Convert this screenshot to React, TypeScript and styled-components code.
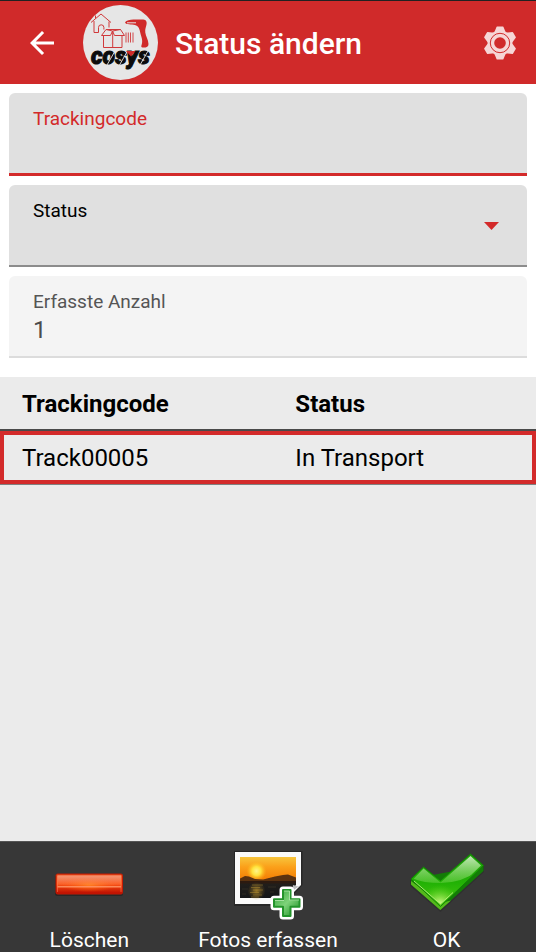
import React, { useState } from "react";
import styled, { createGlobalStyle } from "styled-components";

const GlobalStyle = createGlobalStyle`
  *, *::before, *::after { box-sizing: border-box; }
  body {
    margin: 0;
    background: #ebebeb;
    font-family: Roboto, "Liberation Sans", sans-serif;
    color: #000;
  }
  button, input, select { font: inherit; color: inherit; }
`;

const Screen = styled.div`
  display: flex;
  flex-direction: column;
  min-height: 100vh;
`;

const AppBar = styled.header`
  display: flex;
  align-items: center;
  min-height: 84px;
  padding: 0 19px 0 24px;
  border-top: 1px solid #212121;
  background: #d02a2a;
  color: #fff;
`;

const IconButton = styled.button`
  display: flex;
  padding: 0;
  border: 0;
  background: none;
  cursor: pointer;
`;

const LogoIcon = styled.svg`
  flex: none;
  margin-left: 23px;
`;

const LogoText = styled.text`
  font: italic 900 23px Roboto, "Liberation Sans", sans-serif;
`;

const Title = styled.h1`
  flex: 1;
  margin: 0 0 0 17px;
  padding-top: 3px;
  font-size: 30px;
  line-height: 36px;
  font-weight: 500;
`;

const Form = styled.form`
  display: flex;
  flex-direction: column;
  gap: 9px;
  padding: 9px 9px 19px;
  background: #fff;
`;

type Tone = "active" | "normal" | "readonly";

const tones = {
  active: { back: "#e0e0e0", line: "3px solid #d32a2a", label: "#d32a2a", value: "#000" },
  normal: { back: "#e0e0e0", line: "2px solid #8c8c8c", label: "#000", value: "#000" },
  readonly: { back: "#f4f4f4", line: "2px solid #dcdcdc", label: "#555", value: "#4c4c4c" },
};

const Field = styled.div<{ $tone: Tone }>`
  display: grid;
  grid-template-columns: 1fr auto;
  align-items: center;
  padding: 15px 24px 9px;
  border-bottom: ${(p) => tones[p.$tone].line};
  border-radius: 6px 6px 0 0;
  background: ${(p) => tones[p.$tone].back};
  color: ${(p) => tones[p.$tone].value};
`;

const Label = styled.label<{ $tone: Tone }>`
  grid-column: 1;
  font-size: 19px;
  line-height: 22px;
  color: ${(p) => tones[p.$tone].label};
`;

const TextInput = styled.input`
  grid-column: 1;
  width: 100%;
  height: 34px;
  padding: 0;
  border: 0;
  outline: 0;
  background: none;
  font-size: 24px;
`;

const SelectInput = styled.select`
  grid-column: 1;
  width: 100%;
  height: 34px;
  padding: 0;
  border: 0;
  outline: 0;
  appearance: none;
  background: none;
  font-size: 24px;
`;

const Caret = styled.svg`
  grid-column: 2;
  grid-row: 1 / span 2;
  margin: 0 4px 4px 0;
`;

const List = styled.main`
  flex: 1;
  background: #ebebeb;
`;

const Table = styled.table`
  width: 100%;
  table-layout: fixed;
  border-collapse: separate;
  border-spacing: 0;
  font-size: 24px;
  line-height: 28px;
  text-align: left;
`;

const HeadCell = styled.th`
  padding: 13px 0 11px 22px;
  border-bottom: 2px solid #4a4a4a;
  font-weight: 700;

  &:first-child { width: 51%; }
`;

const Row = styled.tr<{ $selected: boolean }>`
  outline: ${(p) => (p.$selected ? "4px solid #d32a2a" : "none")};
  outline-offset: -4px;
  box-shadow: 0 1px 0 #808080;
`;

const Cell = styled.td`
  padding: 13px 0 12px 22px;
`;

const ActionBar = styled.footer`
  display: grid;
  grid-template-columns: repeat(3, 1fr);
  border-top: 1px solid #555;
  background: #373737;
`;

const Action = styled.button`
  display: flex;
  flex-direction: column;
  align-items: center;
  gap: 8px;
  padding: 6px 0 0;
  border: 0;
  background: none;
  color: #fff;
  font-size: 21px;
  line-height: 24px;
  cursor: pointer;
`;

const BackIcon = () => (
  <svg width="36" height="36" viewBox="0 0 24 24" fill="#fff" aria-hidden="true">
    <path d="M20 11H7.83l5.59-5.59L12 4l-8 8 8 8 1.41-1.41L7.83 13H20v-2z" />
  </svg>
);

const Logo = () => (
  <LogoIcon width="75" height="75" viewBox="0 0 75 75" role="img" aria-label="cosys">
    <circle cx="37.500" cy="37.500" r="37.500" fill="#e6e6e6" />
    <g fill="none" stroke="#d0393b" strokeWidth="1">
      <path d="M8 17.500 18 9l10 8.500M11 16v11.500h4.500v-5a2.700 2.700 0 0 1 5.400 0v2M26 16.500v6M12.500 13.500v-3" />
      <path d="M20.500 31v11.500h18.500V31M23 24.500h14.500l4 6H31.500L29.500 26l-2 4.500h-9zM29.700 26v16.500M23 24.500l6.500 1.500 8-1.500" />
      <path d="M43 27.500v10M45.300 27.500v10M47.500 27.500v10M50 27.500v10" strokeWidth=".9" />
    </g>
    <path
      d="M42 17.200c1.500-2 5-2.800 8.500-2.800h8.500c3.500 0 5 1.200 4.600 4.500-.4 3-1.800 5-1.300 8.500.4 3.500 3 7 3.200 11.500 0 2.800-2 3.800-6 3.600-1.200-.1-1.500-1-1-2.200 1.600-4.200.2-7.300-.8-10.800-.8-3-.9-6.500-3.500-8.500-2.500-1.800-7-1-11.200-2.200z"
      fill="#d02a2a"
    />
    <path d="M44 17.800h9" stroke="#e6e6e6" strokeWidth="1" />
    <LogoText x="8" y="58.500" fill="#0c0c0c" stroke="#0c0c0c" strokeWidth="1">cosys</LogoText>
    <path d="M24 60l8-14M36.500 60l8-14M57 60l8-14" stroke="#e6e6e6" strokeWidth=".9" />
    <path d="M43 46h9.500l-4.500 5.500z" fill="#d02a2a" />
  </LogoIcon>
);

const GearIcon = () => (
  <svg width="34" height="34" viewBox="-17 -17 34 34" aria-hidden="true">
    <g fill="#f6d6d6">
      <circle r="12.400" />
      {[0, 60, 120, 180, 240, 300].map((angle) => (
        <path key={angle} transform={`rotate(${angle})`} d="M-6-10-3.400-16.200Q-3.200-16.600-2.800-16.600H2.800Q3.200-16.600 3.400-16.200L6-10z" />
      ))}
    </g>
    <circle r="9.700" fill="none" stroke="#d02a2a" strokeWidth="1" />
    <circle r="5.800" fill="#d02a2a" />
  </svg>
);

const DeleteIcon = () => (
  <svg width="80" height="72" viewBox="0 0 80 72" aria-hidden="true">
    <defs>
      <linearGradient id="barFill" x1="0" y1="0" x2="0" y2="1">
        <stop offset="0" stopColor="#e8501c" />
        <stop offset=".5" stopColor="#fb4f10" />
        <stop offset="1" stopColor="#b80a00" />
      </linearGradient>
      <linearGradient id="barShine" x1="0" y1="0" x2="0" y2="1">
        <stop offset="0" stopColor="#fff" stopOpacity=".4" />
        <stop offset="1" stopColor="#fff" stopOpacity=".05" />
      </linearGradient>
      <radialGradient id="barGlow">
        <stop offset="0" stopColor="#ff7a1a" />
        <stop offset="1" stopColor="#ff5a10" stopOpacity="0" />
      </radialGradient>
    </defs>
    <rect x="6" y="27" width="68" height="21" rx="2" fill="#222" opacity=".7" />
    <rect x="7" y="26" width="66.500" height="20" rx="1.500" fill="url(#barFill)" stroke="#c41a04" />
    <ellipse cx="40" cy="37" rx="28" ry="7" fill="url(#barGlow)" />
    <rect x="8.500" y="27.500" width="63.500" height="10" fill="url(#barShine)" />
    <path d="M8.500 38.700H72" stroke="#ff9668" strokeWidth="1.500" opacity=".85" />
    <path d="M8.500 44V28H72v16" fill="none" stroke="#ff8a60" strokeWidth=".8" opacity=".6" />
  </svg>
);

const plusPath = "M55 42h7.500v9.300h9v7.500h-9V68H55v-9.200h-9v-7.500h9z";

const PhotoIcon = () => (
  <svg width="80" height="72" viewBox="0 0 80 72" aria-hidden="true">
    <defs>
      <linearGradient id="sky" x1="0" y1="0" x2="0" y2="1">
        <stop offset="0" stopColor="#f7c53c" />
        <stop offset=".4" stopColor="#fba01a" />
        <stop offset="1" stopColor="#f27800" />
      </linearGradient>
      <radialGradient id="sun">
        <stop offset="0" stopColor="#fff58a" />
        <stop offset=".45" stopColor="#ffe23c" />
        <stop offset="1" stopColor="#ffb21a" stopOpacity="0" />
      </radialGradient>
      <linearGradient id="water" x1="0" y1="0" x2="0" y2="1">
        <stop offset="0" stopColor="#3a2c20" />
        <stop offset="1" stopColor="#141618" />
      </linearGradient>
      <radialGradient id="glitter">
        <stop offset="0" stopColor="#b08a2c" stopOpacity=".8" />
        <stop offset="1" stopColor="#8a6a20" stopOpacity="0" />
      </radialGradient>
      <linearGradient id="plusFill" x1="0" y1="0" x2="1" y2="1">
        <stop offset="0" stopColor="#2fa336" />
        <stop offset=".5" stopColor="#7ed37a" />
        <stop offset="1" stopColor="#138a1c" />
      </linearGradient>
    </defs>
    <path d="M6 3h68.500v34L55 58H6z" fill="#1c1c1c" opacity=".6" />
    <path d="M7 4h66v33L54 56H7z" fill="#fafafa" />
    <path d="M12 9h56v28L55 50H12z" fill="url(#water)" />
    <path d="M12 9h56v25H12z" fill="url(#sky)" />
    <circle cx="28.500" cy="23" r="10" fill="url(#sun)" />
    <path d="M12 30.500l5-2.500 4 .5 6 2.500 8 .5 6-1.500 6-1.500 8-1.500 5-.5 8 3V35H12z" fill="#5a3210" />
    <path d="M12 33h56v2.500H12z" fill="#2c1a10" />
    <ellipse cx="28.500" cy="43" rx="9" ry="9" fill="url(#glitter)" />
    <path d="M24 37h11M23 39.500h9M25 42h10M22 44.500h9M25 47h9M23 49h8" stroke="#c39a35" strokeWidth=".8" opacity=".5" />
    <path d="M40 39h8M14 41h6M42 44h4M14 46h4" stroke="#66593a" strokeWidth=".7" opacity=".4" />
    <path d="M64 43l9-6-3 1.500-5-1.500z" fill="#bdbdbd" />
    <path d={plusPath} fill="#fff" stroke="#fff" strokeWidth="7" strokeLinejoin="round" />
    <path d={plusPath} fill="url(#plusFill)" stroke="#23942b" strokeWidth="2" strokeLinejoin="round" />
    <path d="M56 43h5.500v9H71M47 52.500h9" fill="none" stroke="#b8ecb2" strokeWidth="1" opacity=".8" />
  </svg>
);

const CheckIcon = () => (
  <svg width="80" height="72" viewBox="0 0 80 72" aria-hidden="true">
    <defs>
      <linearGradient id="checkFill" x1="0" y1="0" x2="0" y2="1">
        <stop offset="0" stopColor="#1c9c08" />
        <stop offset=".55" stopColor="#22b205" />
        <stop offset="1" stopColor="#4cc814" />
      </linearGradient>
      <radialGradient id="checkGlow" gradientUnits="userSpaceOnUse" cx="33" cy="57" r="20">
        <stop offset="0" stopColor="#e4ff9c" />
        <stop offset="1" stopColor="#5fd816" stopOpacity="0" />
      </radialGradient>
      <linearGradient id="checkShine" x1="0" y1="0" x2="0" y2="1">
        <stop offset="0" stopColor="#fff" stopOpacity=".95" />
        <stop offset="1" stopColor="#b8f090" stopOpacity=".25" />
      </linearGradient>
      <clipPath id="checkClip">
        <path d="M6.500 31 16.500 20.500 33.500 34.500 63.500 8 74 17.500 33.500 56z" />
      </clipPath>
    </defs>
    <path d="M3 32v6l30.500 26L77 24v-6z" fill="#222" opacity=".4" />
    <path d="M4 31v5.500L33.300 62 76.500 23v-5.500z" fill="#137c06" />
    <path d="M4 33v3.500L33.300 62 44 52.500 33 55z" fill="#55b91c" />
    <path d="M4 31 16.500 19 33.500 32.500 63.500 6 76.500 17.500 33.500 58.500z" fill="url(#checkFill)" stroke="#108203" strokeWidth="1" strokeLinejoin="round" />
    <g clipPath="url(#checkClip)">
      <path d="M0 25h80v40H0z" fill="url(#checkGlow)" />
      <path d="M0 0h80v17Q58 35 34 35 16 35 6 30.500L0 30z" fill="url(#checkShine)" />
    </g>
    <path d="M7 33l26.500 23L46 44.500" fill="none" stroke="#c9f58c" strokeWidth="1" opacity=".8" />
  </svg>
);

const entries = [{ code: "Track00005", status: "In Transport" }];

const actions = [
  { label: "Löschen", Icon: DeleteIcon },
  { label: "Fotos erfassen", Icon: PhotoIcon },
  { label: "OK", Icon: CheckIcon },
];

export default function App() {
  const [code, setCode] = useState("");
  const [status, setStatus] = useState("");
  const [selected, setSelected] = useState(0);

  return (
    <Screen>
      <GlobalStyle />
      <AppBar>
        <IconButton type="button" aria-label="Zurück">
          <BackIcon />
        </IconButton>
        <Logo />
        <Title>Status ändern</Title>
        <IconButton type="button" aria-label="Einstellungen">
          <GearIcon />
        </IconButton>
      </AppBar>

      <Form onSubmit={(e) => e.preventDefault()}>
        <Field $tone="active">
          <Label $tone="active" htmlFor="code">Trackingcode</Label>
          <TextInput id="code" value={code} onChange={(e) => setCode(e.target.value)} />
        </Field>
        <Field $tone="normal">
          <Label $tone="normal" htmlFor="status">Status</Label>
          <SelectInput id="status" value={status} onChange={(e) => setStatus(e.target.value)}>
            <option value="" />
            <option>In Transport</option>
          </SelectInput>
          <Caret width="15" height="8" viewBox="0 0 15 8" aria-hidden="true">
            <path d="M0 0h15L7.500 8z" fill="#d32a2a" />
          </Caret>
        </Field>
        <Field $tone="readonly">
          <Label $tone="readonly" htmlFor="count">Erfasste Anzahl</Label>
          <TextInput id="count" value={entries.length} readOnly />
        </Field>
      </Form>

      <List>
        <Table>
          <thead>
            <tr>
              <HeadCell scope="col">Trackingcode</HeadCell>
              <HeadCell scope="col">Status</HeadCell>
            </tr>
          </thead>
          <tbody>
            {entries.map((entry, i) => (
              <Row key={entry.code} $selected={i === selected} onClick={() => setSelected(i)}>
                <Cell>{entry.code}</Cell>
                <Cell>{entry.status}</Cell>
              </Row>
            ))}
          </tbody>
        </Table>
      </List>

      <ActionBar>
        {actions.map(({ label, Icon }) => (
          <Action key={label} type="button">
            <Icon />
            {label}
          </Action>
        ))}
      </ActionBar>
    </Screen>
  );
}
